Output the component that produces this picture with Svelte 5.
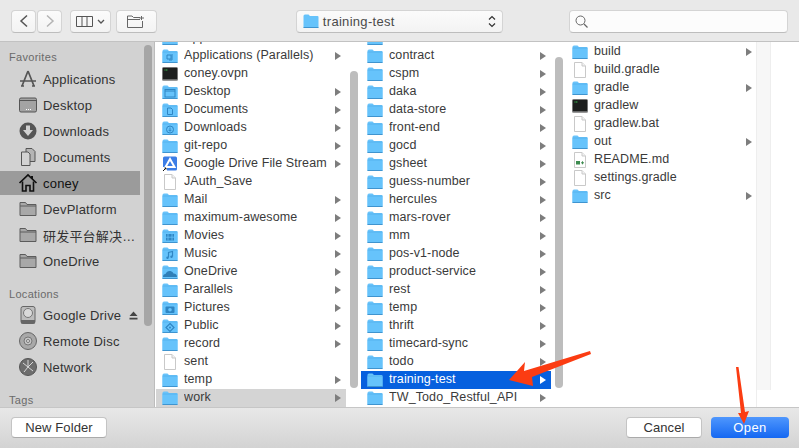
<script>
	const favorites = [
		{ name: "Applications", icon: "apps" },
		{ name: "Desktop", icon: "desktop" },
		{ name: "Downloads", icon: "downloads" },
		{ name: "Documents", icon: "documents" },
		{ name: "coney", icon: "home", active: true },
		{ name: "DevPlatform", icon: "folder" },
		{ name: "研发平台解决…", icon: "folder" },
		{ name: "OneDrive", icon: "folder" }
	];
	const locations = [
		{ name: "Google Drive", icon: "drive", eject: true },
		{ name: "Remote Disc", icon: "disc" },
		{ name: "Network", icon: "network" }
	];

	const f = (name, glyph = "") => ({ name, kind: "folder", glyph, more: true });
	const doc = (name) => ({ name, kind: "file" });

	const first = [
		f("Applications"),
		f("Applications (Parallels)", "apps"),
		{ name: "coney.ovpn", kind: "term" },
		f("Desktop", "desk"),
		f("Documents", "doc"),
		f("Downloads", "down"),
		f("git-repo"),
		{ name: "Google Drive File Stream", kind: "gdrive", more: true },
		doc("JAuth_Save"),
		f("Mail"),
		f("maximum-awesome"),
		f("Movies", "movie"),
		f("Music", "music"),
		f("OneDrive", "cloud"),
		f("Parallels"),
		f("Pictures", "photo"),
		f("Public", "public"),
		f("record"),
		doc("sent"),
		f("temp"),
		{ ...f("work"), state: "trail" }
	];
	const second = [
		f(""),
		...["contract", "cspm", "daka", "data-store", "front-end", "gocd", "gsheet", "guess-number", "hercules", "mars-rover", "mm", "pos-v1-node", "product-service", "rest", "temp", "thrift", "timecard-sync", "todo"].map((n) => f(n)),
		{ ...f("training-test"), state: "selected" },
		f("TW_Todo_Restful_API")
	];
	const third = [
		f("build"),
		doc("build.gradle"),
		f("gradle"),
		{ name: "gradlew", kind: "term" },
		doc("gradlew.bat"),
		f("out"),
		{ name: "README.md", kind: "md" },
		doc("settings.gradle"),
		f("src")
	];
</script>

{#snippet folder(glyph)}
	<svg class="ficon" viewBox="0 0 16 16" width="16" height="16">
		<path d="M0.5 3 Q0.5 1.5 2 1.5 H5.5 L7 3 H14.5 Q15.5 3 15.5 4 V14 Q15.5 15 14.5 15 H1.5 Q0.5 15 0.5 14 Z" fill="#6ac4fb" />
		<path d="M0.5 4.2 H15.5 V14 Q15.5 15 14.5 15 H1.5 Q0.5 15 0.5 14 Z" fill="#66c3fb" />
		<path d="M0.5 14.5 H15.5" stroke="#3f94cf" stroke-width="1" />
		<path d="M0.5 4 H15.5" stroke="#4aa8e6" stroke-width="0.6" />
		{#if glyph === "apps"}
			<path d="M5 7 H9 V11 H5 Z M10 6 V12 H7" fill="none" stroke="#2f86c4" />
		{:else if glyph === "desk"}
			<rect x="3" y="5.5" width="10" height="7.5" fill="none" stroke="#2f86c4" />
			<path d="M3 7 H13" stroke="#2f86c4" />
		{:else if glyph === "doc"}
			<path d="M5.5 6 H9 L10.5 7.5 V12.5 H5.5 Z" fill="none" stroke="#2f86c4" />
		{:else if glyph === "down"}
			<circle cx="8" cy="9.5" r="3.5" fill="none" stroke="#2f86c4" />
			<path d="M8 7.5 V11 M6.5 9.8 L8 11.3 L9.5 9.8" fill="none" stroke="#2f86c4" />
		{:else if glyph === "movie"}
			<rect x="4" y="6" width="8" height="6.5" fill="#2f86c4" />
			<path d="M6 6 V12.5 M10 6 V12.5 M4 9.2 H12" stroke="#66c3fb" stroke-width="0.8" />
		{:else if glyph === "music"}
			<path d="M6.5 11.5 V6.5 L10.5 5.5 V10.5" fill="none" stroke="#2f86c4" stroke-width="1.2" />
			<circle cx="5.5" cy="11.8" r="1.2" fill="#2f86c4" />
			<circle cx="9.5" cy="10.8" r="1.2" fill="#2f86c4" />
		{:else if glyph === "cloud"}
			<path d="M1 13 Q1 10 3.5 10 Q5 6.5 8.5 7 Q11 7.5 11.5 9.5 Q15 9.5 15 13 Z" fill="#2f7fb8" />
		{:else if glyph === "photo"}
			<rect x="3.5" y="6.5" width="9" height="6.5" rx="1" fill="#2f86c4" />
			<circle cx="8" cy="9.7" r="1.8" fill="#66c3fb" />
		{:else if glyph === "public"}
			<path d="M8 5.5 L12 9.5 L8 13.5 L4 9.5 Z" fill="none" stroke="#2f86c4" stroke-width="1.2" />
			<circle cx="8" cy="9.5" r="1" fill="#2f86c4" />
		{/if}
	</svg>
{/snippet}

{#snippet page(extra)}
	<svg class="ficon" viewBox="0 0 16 16" width="16" height="16">
		<path d="M2.5 0.5 H10 L13.5 4 V15.5 H2.5 Z" fill="#fff" stroke="#c9c9c9" />
		<path d="M10 0.5 V4 H13.5" fill="#f2f2f2" stroke="#c9c9c9" />
		{#if extra}
			<rect x="4" y="9" width="4" height="3.5" fill="#3d8b4f" />
			<path d="M9 10.8 H12 M10.5 9.3 V12.3" stroke="#3d8b4f" />
		{/if}
	</svg>
{/snippet}

{#snippet term()}
	<svg class="ficon" viewBox="0 0 16 16" width="16" height="16">
		<rect x="0.5" y="1.5" width="15" height="13" rx="1" fill="#1d1f1e" stroke="#777" />
		<path d="M0.5 14 H15.5" stroke="#bbb" />
		<path d="M2.5 4 H6" stroke="#3fcf55" stroke-dasharray="1 0.6" />
	</svg>
{/snippet}

{#snippet gdrive()}
	<svg class="ficon" viewBox="0 0 16 16" width="16" height="16">
		<rect x="1" y="0.5" width="14" height="14" rx="1.5" fill="#3c7de6" />
		<path d="M8 3 L12.5 11 H3.5 Z" fill="none" stroke="#fff" stroke-width="2" />
		<rect x="0" y="11" width="5" height="5" fill="#fff" />
		<path d="M1 15 L4 12 M2.5 12 H4 V13.5" stroke="#111" fill="none" />
	</svg>
{/snippet}

{#snippet side(name)}
	<svg class="sicon" viewBox="0 0 20 20" width="20" height="20">
		{#if name === "apps"}
			<path d="M10 2 L4 17 M10 2 L16 17 M2 12 H18 M3 17 H6 M14 17 H17" fill="none" stroke="#555" stroke-width="1.7" />
		{:else if name === "desktop"}
			<rect x="1.5" y="3" width="17" height="14" rx="1.5" fill="#a3a3a3" stroke="#555" />
			<path d="M1.5 5.5 H18.5" stroke="#555" />
			<path d="M8 14.5 H13" stroke="#fff" stroke-dasharray="1 1" />
		{:else if name === "downloads"}
			<circle cx="10" cy="10" r="8.5" fill="#555" />
			<path d="M8 4.5 H12 V9 H15 L10 15 L5 9 H8 Z" fill="#d2d2d2" />
		{:else if name === "documents"}
			<path d="M8 1.5 H14 L17 4.5 V14.5 H8 Z" fill="#b5b5b5" stroke="#555" />
			<path d="M3.5 5 H10 L12 7 V18.5 H3.5 Z" fill="#d2d2d2" stroke="#555" />
		{:else if name === "home"}
			<path d="M1.5 10 L10 2 L18.5 10" fill="none" stroke="#111" stroke-width="1.7" />
			<path d="M4.5 8.5 V18 H8 V12.5 H12 V18 H15.5 V8.5" fill="none" stroke="#111" stroke-width="1.6" />
			<path d="M14 3 V6" stroke="#111" stroke-width="2" />
		{:else if name === "folder"}
			<path d="M2 16.5 V3.5 H7.5 L9 5.5 H18 V16.5 Z" fill="#a8a8a8" stroke="#5c5c5c" />
			<path d="M2 7 H18" stroke="#5c5c5c" />
		{:else if name === "drive"}
			<rect x="3" y="1.5" width="14" height="17" rx="2" fill="#bdbdbd" stroke="#666" />
			<circle cx="10" cy="8" r="4.5" fill="#d9d9d9" stroke="#777" />
			<rect x="3" y="15" width="14" height="3.5" fill="#666" />
		{:else if name === "disc"}
			<circle cx="10" cy="10" r="8.5" fill="#a8a8a8" stroke="#666" />
			<circle cx="10" cy="10" r="4" fill="#c4c4c4" stroke="#777" />
			<circle cx="10" cy="10" r="1.5" fill="#e8e8e8" stroke="#777" />
		{:else if name === "network"}
			<circle cx="10" cy="10" r="8.5" fill="#6d6d6d" stroke="#555" />
			<path d="M5 6 L10 10 L15 5 M10 10 L6 15 M10 10 L15 14 M10 3 V10" stroke="#d8d8d8" fill="none" />
		{/if}
	</svg>
{/snippet}

{#snippet sideRow(item)}
	<div class="side-row" class:active={item.active}>
		{@render side(item.icon)}
		<span>{item.name}</span>
		{#if item.eject}
			<svg class="eject" viewBox="0 0 9 9" width="9" height="9">
				<path d="M4.5 0.5 L8.5 5 H0.5 Z M0.5 6.8 H8.5 V8.5 H0.5 Z" fill="#444" />
			</svg>
		{/if}
	</div>
{/snippet}

{#snippet column(rows)}
	<div class="rows">
		{#each rows as row}
			<div class="row {row.state ?? ''}">
				{#if row.kind === "folder"}
					{@render folder(row.glyph)}
				{:else if row.kind === "term"}
					{@render term()}
				{:else if row.kind === "gdrive"}
					{@render gdrive()}
				{:else}
					{@render page(row.kind === "md")}
				{/if}
				<span class="label">{row.name}</span>
				{#if row.more}
					<svg class="more" viewBox="0 0 6 8" width="6" height="8"><path d="M0 0 L6 4 L0 8 Z" /></svg>
				{/if}
			</div>
		{/each}
	</div>
{/snippet}

<div class="dialog">
	<header class="toolbar">
		<div class="nav">
			<button class="tool nav-btn" aria-label="Back">
				<svg viewBox="0 0 10 14" width="10" height="14"><path d="M8 1.5 L2 7 L8 12.5" fill="none" stroke="#555" stroke-width="1.5" /></svg>
			</button>
			<button class="tool nav-btn" aria-label="Forward">
				<svg viewBox="0 0 10 14" width="10" height="14"><path d="M2 1.5 L8 7 L2 12.5" fill="none" stroke="#b4b4b4" stroke-width="1.5" /></svg>
			</button>
		</div>
		<button class="tool view-btn" aria-label="View">
			<svg viewBox="0 0 17 11" width="17" height="11"><path d="M0.5 0.5 H16.5 V10.5 H0.5 Z M6 0.5 V10.5 M11 0.5 V10.5" fill="none" stroke="#555" /></svg>
			<svg viewBox="0 0 8 5" width="8" height="5"><path d="M1 1 L4 4 L7 1" fill="none" stroke="#555" stroke-width="1.3" /></svg>
		</button>
		<button class="tool newdir-btn" aria-label="New folder">
			<svg viewBox="0 0 19 13" width="19" height="13"><path d="M0.5 12.5 V1 H5 L6.5 2.5 H13 M0.5 4.5 H13 M0.5 12.5 H15.5 V6 M14.5 1 V5 M12.5 3 H17" fill="none" stroke="#666" /></svg>
		</button>
		<div class="tool path">
			<svg class="ficon" viewBox="0 0 16 16" width="16" height="16">
				<path d="M0.5 3 Q0.5 1.5 2 1.5 H5.5 L7 3 H14.5 Q15.5 3 15.5 4 V14 Q15.5 15 14.5 15 H1.5 Q0.5 15 0.5 14 Z" fill="#66c3fb" />
				<path d="M0.5 14.5 H15.5" stroke="#3f94cf" />
			</svg>
			<span class="path-name">training-test</span>
			<svg class="updown" viewBox="0 0 8 13" width="8" height="13"><path d="M1 4.5 L4 1.5 L7 4.5 M1 8.5 L4 11.5 L7 8.5" fill="none" stroke="#333" stroke-width="1.2" /></svg>
		</div>
		<div class="tool search">
			<svg viewBox="0 0 13 13" width="13" height="13"><circle cx="5.5" cy="5.5" r="4.5" fill="none" stroke="#666" /><path d="M9 9 L12.5 12.5" stroke="#666" stroke-width="1.2" /></svg>
		</div>
	</header>

	<main class="browser">
		<aside class="sidebar">
			<nav class="side-list">
				<div class="side-title first">Favorites</div>
				{#each favorites as item}
					{@render sideRow(item)}
				{/each}
				<div class="side-title">Locations</div>
				{#each locations as item}
					{@render sideRow(item)}
				{/each}
				<div class="side-title">Tags</div>
			</nav>
			<div class="side-gutter"><div class="thumb side-thumb"></div></div>
		</aside>

		<section class="col col-a">
			{@render column(first)}
			<div class="gutter"><div class="thumb thumb-a"></div></div>
		</section>
		<section class="col col-b">
			{@render column(second)}
			<div class="gutter"><div class="thumb thumb-b"></div></div>
		</section>
		<section class="col col-c">
			{@render column(third)}
			<div class="strip"></div>
		</section>
	</main>

	<footer class="footer">
		<button class="btn newfolder">New Folder</button>
		<div class="actions">
			<button class="btn cancel">Cancel</button>
			<button class="btn open">Open</button>
		</div>
	</footer>

	<svg class="arrows" viewBox="0 0 799 448" width="799" height="448">
		<path d="M509 380 L525 362 L524 371 L590 351 L591 354 L532 377 L533 386 Z" fill="#fb3c12" />
		<path d="M736 367 L738.5 367 L745 412 L749 411 L744 424 L738 413 L741 413 Z" fill="#fb3c12" />
	</svg>
</div>

<style>
	:global(body) {
		margin: 0;
		background: #fff;
	}

	.dialog {
		position: relative;
		width: 799px;
		height: 448px;
		display: flex;
		flex-direction: column;
		overflow: hidden;
		font-family: "Liberation Sans", "Noto Sans CJK SC", sans-serif;
		font-size: 13px;
		color: #3a3a3a;
	}

	.toolbar {
		height: 42px;
		flex-shrink: 0;
		box-sizing: border-box;
		display: flex;
		align-items: center;
		padding: 1px 11px 0;
		background: #e9e9e9;
		border-bottom: 1px solid #c2c2c2;
	}

	.tool {
		box-sizing: border-box;
		height: 23px;
		padding: 0;
		display: flex;
		align-items: center;
		justify-content: center;
		background: linear-gradient(#fbfbfb, #f3f3f3);
		border: 1px solid #d4d4d4;
		border-bottom-color: #bdbdbd;
		border-radius: 4px;
	}

	.nav {
		display: flex;
		gap: 1px;
	}

	.nav-btn {
		width: 25px;
	}

	.view-btn {
		width: 41px;
		margin-left: 8px;
		gap: 4px;
	}

	.newdir-btn {
		width: 41px;
		margin-left: 5px;
	}

	.path {
		width: 208px;
		margin-left: 139px;
		justify-content: flex-start;
		padding-left: 6px;
		gap: 4px;
	}

	.path-name {
		flex: 1;
		color: #4a4a4a;
		letter-spacing: 0.3px;
	}

	.updown {
		margin-right: 6px;
	}

	.search {
		width: 219px;
		margin-left: 66px;
		justify-content: flex-start;
		padding-left: 5px;
		background: #fcfcfc;
	}

	.browser {
		flex: 1;
		min-height: 0;
		display: flex;
		background: #fff;
	}

	.sidebar {
		width: 155px;
		flex-shrink: 0;
		display: flex;
		overflow: hidden;
		background: #d2d2d2;
		box-shadow: inset -1px 0 0 #bcbcbc;
	}

	.side-list {
		width: 140px;
		flex-shrink: 0;
	}

	.side-title {
		height: 20px;
		margin: 9px 0 -1px;
		padding-left: 9px;
		line-height: 22px;
		font-size: 11px;
		letter-spacing: 0.3px;
		color: #6a6a6a;
	}

	.side-title.first {
		margin: 4px 0 0;
	}

	.side-row {
		height: 26px;
		display: flex;
		align-items: center;
		gap: 5px;
		padding-left: 18px;
		letter-spacing: 0.2px;
		white-space: nowrap;
	}

	.side-row span {
		color: #333;
	}

	.side-row.active {
		height: 24px;
		margin: 1px 0;
		background: #9b9b9b;
	}

	.side-row.active span {
		color: #111;
	}

	.sicon {
		flex-shrink: 0;
	}

	.eject {
		flex-shrink: 0;
		margin-left: 3px;
	}

	.side-gutter {
		flex: 1;
		padding-left: 4px;
	}

	.thumb {
		width: 8px;
		background: #bdbdbd;
		border-radius: 4px;
	}

	.side-thumb {
		height: 281px;
		margin-top: 3px;
		background: #a6a6a6;
	}

	.col {
		flex-shrink: 0;
		display: flex;
		overflow: hidden;
	}

	.col-a {
		width: 206px;
		padding-left: 1px;
		box-sizing: border-box;
	}

	.col-b {
		width: 205px;
	}

	.col-c {
		flex: 1;
	}

	.rows {
		width: 190px;
		height: 365px;
		flex-shrink: 0;
		box-sizing: border-box;
		display: flex;
		flex-direction: column;
		justify-content: flex-end;
	}

	.col-c .rows {
		width: 191px;
		padding-top: 1px;
		justify-content: flex-start;
		box-shadow: inset -1px 0 0 #eee;
	}

	.row {
		height: 18px;
		flex-shrink: 0;
		box-sizing: border-box;
		display: flex;
		align-items: center;
		gap: 6px;
		padding: 0 5px 0 6px;
		font-size: 12.5px;
		letter-spacing: 0.1px;
		color: #3a3a3a;
	}

	.row.trail {
		background: #d4d4d4;
	}

	.row.selected {
		background: #0660de;
		color: #fff;
	}

	.row.selected .more {
		fill: #fff;
	}

	.ficon {
		flex-shrink: 0;
	}

	.label {
		flex: 1;
		min-width: 0;
		margin-top: -2px;
		white-space: nowrap;
		overflow: hidden;
	}

	.more {
		flex-shrink: 0;
		fill: #7d7d7d;
	}

	.gutter {
		flex: 1;
		display: flex;
		flex-direction: column;
		justify-content: flex-end;
		padding: 0 0 18px 4px;
		height: 346px;
	}

	.thumb-a {
		height: 317px;
	}

	.thumb-b {
		height: 331px;
	}

	.strip {
		width: 14px;
		height: 348px;
		background: #f7f7f7;
		box-shadow: inset -1px 0 0 #eee;
	}

	.footer {
		height: 41px;
		flex-shrink: 0;
		box-sizing: border-box;
		display: flex;
		align-items: center;
		justify-content: space-between;
		padding: 0 10px 1px 11px;
		background: linear-gradient(#e8e8e8, #d3d3d3);
		border-top: 1px solid #c6c6c6;
	}

	.actions {
		display: flex;
		gap: 9px;
	}

	.btn {
		box-sizing: border-box;
		height: 21px;
		padding: 0;
		font-family: inherit;
		font-size: 13px;
		letter-spacing: 0.1px;
		color: #333;
		background: #fff;
		border: 1px solid #c4c4c4;
		border-bottom-color: #aaa;
		border-radius: 4px;
	}

	.newfolder {
		width: 96px;
	}

	.cancel {
		width: 76px;
	}

	.open {
		width: 78px;
		color: #fff;
		border: none;
		letter-spacing: 0.4px;
		background: linear-gradient(#4f97fd, #1467f2);
	}

	.arrows {
		position: absolute;
		left: 0;
		top: 0;
		pointer-events: none;
	}
</style>
